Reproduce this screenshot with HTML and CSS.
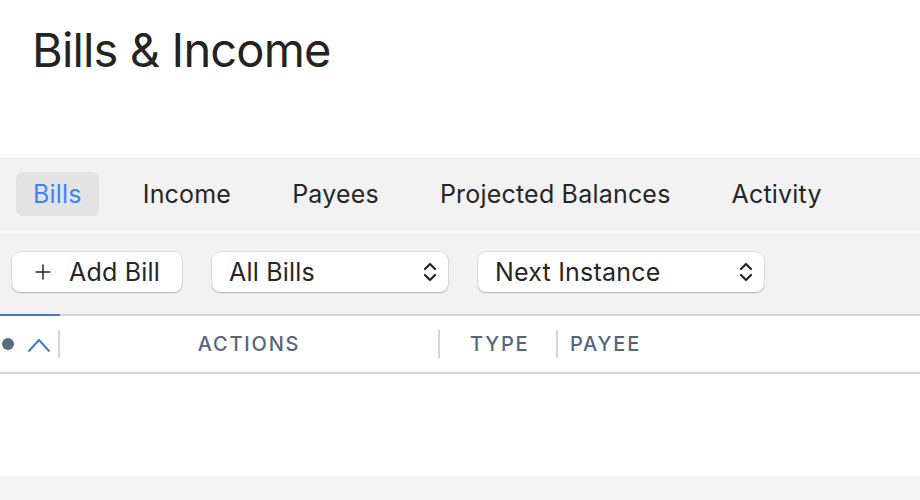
FILE: index.html
```html
<!DOCTYPE html>
<html>
<head>
<meta charset="utf-8">
<link rel="stylesheet" href="styles.css">
</head>
<body>
<header class="page-head">
  <h1 class="title">Bills &amp; Income</h1>
</header>
<nav class="tabs">
  <span class="tab active">Bills</span>
  <span class="tab">Income</span>
  <span class="tab">Payees</span>
  <span class="tab">Projected Balances</span>
  <span class="tab">Activity</span>
</nav>
<div class="strip"></div>
<div class="toolbar">
  <button class="btn add-btn"><svg class="plus" width="16" height="16" viewBox="0 0 16 16"><path d="M8 0.5 V15.5 M0.5 8 H15.5" fill="none" stroke="#262626" stroke-width="1.5"/></svg>Add Bill</button>
  <div class="btn select sel-bills"><span>All Bills</span>
    <svg class="updown" width="16" height="22" viewBox="0 0 16 22"><path d="M3 8 L8 3 L13 8 M3 14 L8 19 L13 14" fill="none" stroke="#262626" stroke-width="2.2" stroke-linecap="round" stroke-linejoin="round"/></svg>
  </div>
  <div class="btn select sel-next"><span>Next Instance</span>
    <svg class="updown" width="16" height="22" viewBox="0 0 16 22"><path d="M3 8 L8 3 L13 8 M3 14 L8 19 L13 14" fill="none" stroke="#262626" stroke-width="2.2" stroke-linecap="round" stroke-linejoin="round"/></svg>
  </div>
</div>
<div class="table-head">
  <div class="col col-sort">
    <span class="dot"></span>
    <svg class="chev" width="24" height="16" viewBox="0 0 24 16"><path d="M1.5 14.5 L12 3 L22.5 14.5" fill="none" stroke="#3f7bc9" stroke-width="2"/></svg>
  </div>
  <div class="col col-actions">ACTIONS</div>
  <div class="col col-type">TYPE</div>
  <div class="col col-payee">PAYEE</div>
</div>
<main class="body-area"></main>
<footer class="foot"></footer>
</body>
</html>
```

FILE: styles.css
```css
* { box-sizing: border-box; }
html, body { margin: 0; padding: 0; background: #fff; }
body {
  font-family: Inter, "Open Sans", "Liberation Sans", sans-serif;
  color: #262626;
  width: 920px;
  height: 500px;
  overflow: hidden;
  display: flex;
  flex-direction: column;
}
.page-head {
  height: 158px;
  padding: 21px 0 0 32px;
}
.title {
  margin: 0;
  font-size: 47px;
  font-weight: 400;
  line-height: 58px;
  letter-spacing: -0.85px;
  color: #232323;
}
.tabs {
  height: 73px;
  border-top: 1px solid #e7e7e7;
  background: #f2f2f2;
  display: flex;
  align-items: center;
  padding: 0 0 2px 16px;
  gap: 27px;
}
.tab {
  height: 44px;
  display: flex;
  align-items: center;
  padding: 0 17px;
  font-size: 25px;
  letter-spacing: 0.2px;
  color: #262626;
  border-radius: 7px;
}
.tab.active {
  background: #e3e3e3;
  color: #3d86f2;
}
.strip { height: 2px; background: #fafafa; }
.toolbar {
  height: 81px;
  background: #f2f2f2;
  display: flex;
  align-items: flex-start;
  padding: 19px 0 0 12px;
  gap: 30px;
}
.btn {
  height: 40px;
  background: #fff;
  border: none;
  border-radius: 8px;
  box-shadow: 0 0 0 0.5px rgba(0,0,0,0.14), 0 1px 1.5px rgba(0,0,0,0.22);
  font-family: inherit;
  font-size: 25px;
  letter-spacing: 0.2px;
  color: #262626;
  display: flex;
  align-items: center;
}
.add-btn {
  width: 170px;
  padding: 0 0 0 23px;
}
.plus {
  margin-right: 18px;
}
.select {
  padding: 0 10px 0 17px;
  justify-content: space-between;
}
.sel-bills { width: 236px; }
.sel-next { width: 286px; }
.table-head {
  height: 60px;
  border-top: 2px solid #d5d5d5;
  border-bottom: 2px solid #d8d8d8;
  display: flex;
  align-items: center;
  position: relative;
}
.table-head::before {
  content: "";
  position: absolute;
  left: 0;
  top: -2px;
  width: 60px;
  height: 2px;
  background: #3f7bc9;
}
.col {
  height: 28px;
  display: flex;
  align-items: center;
  font-size: 20px;
  letter-spacing: 1.8px;
  color: #56677d;
  font-weight: 500;
}
.col-sort {
  width: 60px;
  border-right: 2px solid #d6d6d6;
  padding-left: 2px;
}
.dot {
  width: 12px;
  height: 12px;
  border-radius: 50%;
  background: #5a6a7e;
  margin-right: 13px;
}
.chev { margin-top: 1px; }
.col-actions {
  width: 380px;
  justify-content: center;
  border-right: 2px solid #d6d6d6;
}
.col-type {
  width: 118px;
  padding-left: 30px;
  border-right: 2px solid #d6d6d6;
}
.col-payee { padding-left: 12px; }
.body-area { flex: 1; background: #fff; }
.foot { height: 24px; background: #f3f4f3; }
```
